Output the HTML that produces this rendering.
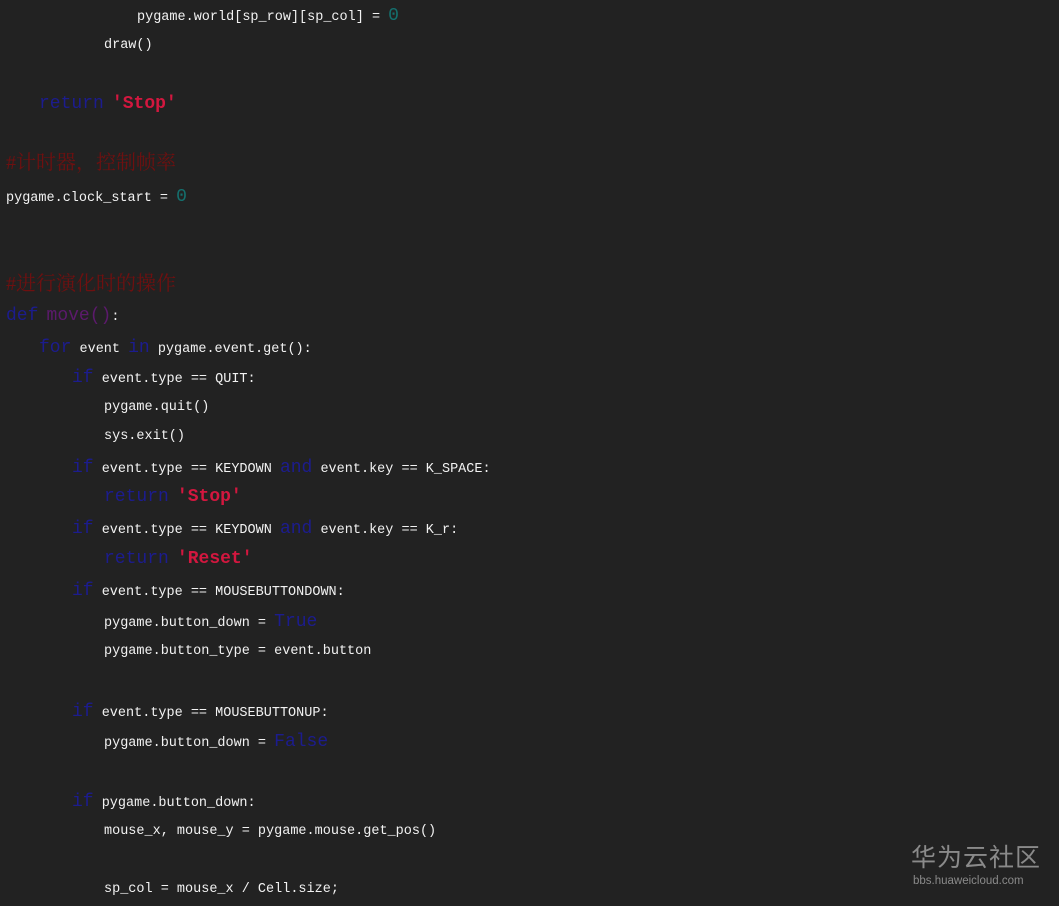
<!DOCTYPE html>
<html><head><meta charset="utf-8"><style>
html,body{margin:0;padding:0;background:#222222;width:1059px;height:906px;overflow:hidden;position:relative}
.l{position:absolute;height:20px;line-height:20px;white-space:pre;font-family:"Liberation Mono",monospace;font-size:13.5px;color:#f2f2f2}
.k{font-size:18px;color:#1c1c8e}
.s{font-size:18px;color:#d3173f;font-weight:bold}
.n{font-size:18px;color:#14706e}
.p{font-size:18px;color:#5c1a6c}
.c{font-family:"Liberation Serif","Noto Serif CJK SC",serif;font-size:20px;color:#6e1010}
.w1{position:absolute;left:911px;top:843px;font-family:"Liberation Sans","Noto Sans CJK SC",sans-serif;font-size:25px;color:#8a8a8a;letter-spacing:1px;line-height:30px}
.w2{position:absolute;left:913px;top:874px;font-family:"Liberation Sans",sans-serif;font-size:11.5px;color:#8a8a8a;line-height:14px}
</style></head><body>
<div class="l" style="left:137px;top:6px">pygame.world[sp_row][sp_col] = <span class="n">0</span></div>
<div class="l" style="left:104px;top:36px">draw()</div>
<div class="l" style="left:39px;top:94px"><span class="k">return</span> <span class="s">'Stop'</span></div>
<div class="l c" style="left:6px;top:153px">#计时器，控制帧率</div>
<div class="l" style="left:6px;top:187px">pygame.clock_start = <span class="n">0</span></div>
<div class="l c" style="left:6px;top:274px">#进行演化时的操作</div>
<div class="l" style="left:6px;top:306px"><span class="k">def</span> <span class="p">move()</span>:</div>
<div class="l" style="left:39px;top:338px"><span class="k">for</span> event <span class="k">in</span> pygame.event.get():</div>
<div class="l" style="left:72px;top:368px"><span class="k">if</span> event.type == QUIT:</div>
<div class="l" style="left:104px;top:398px">pygame.quit()</div>
<div class="l" style="left:104px;top:427px">sys.exit()</div>
<div class="l" style="left:72px;top:458px"><span class="k">if</span> event.type == KEYDOWN <span class="k">and</span> event.key == K_SPACE:</div>
<div class="l" style="left:104px;top:487px"><span class="k">return</span> <span class="s">'Stop'</span></div>
<div class="l" style="left:72px;top:519px"><span class="k">if</span> event.type == KEYDOWN <span class="k">and</span> event.key == K_r:</div>
<div class="l" style="left:104px;top:549px"><span class="k">return</span> <span class="s">'Reset'</span></div>
<div class="l" style="left:72px;top:581px"><span class="k">if</span> event.type == MOUSEBUTTONDOWN:</div>
<div class="l" style="left:104px;top:612px">pygame.button_down = <span class="k">True</span></div>
<div class="l" style="left:104px;top:642px">pygame.button_type = event.button</div>
<div class="l" style="left:72px;top:702px"><span class="k">if</span> event.type == MOUSEBUTTONUP:</div>
<div class="l" style="left:104px;top:732px">pygame.button_down = <span class="k">False</span></div>
<div class="l" style="left:72px;top:792px"><span class="k">if</span> pygame.button_down:</div>
<div class="l" style="left:104px;top:822px">mouse_x, mouse_y = pygame.mouse.get_pos()</div>
<div class="l" style="left:104px;top:880px">sp_col = mouse_x / Cell.size;</div>
<div class="w1">华为云社区</div>
<div class="w2">bbs.huaweicloud.com</div>
</body></html>
